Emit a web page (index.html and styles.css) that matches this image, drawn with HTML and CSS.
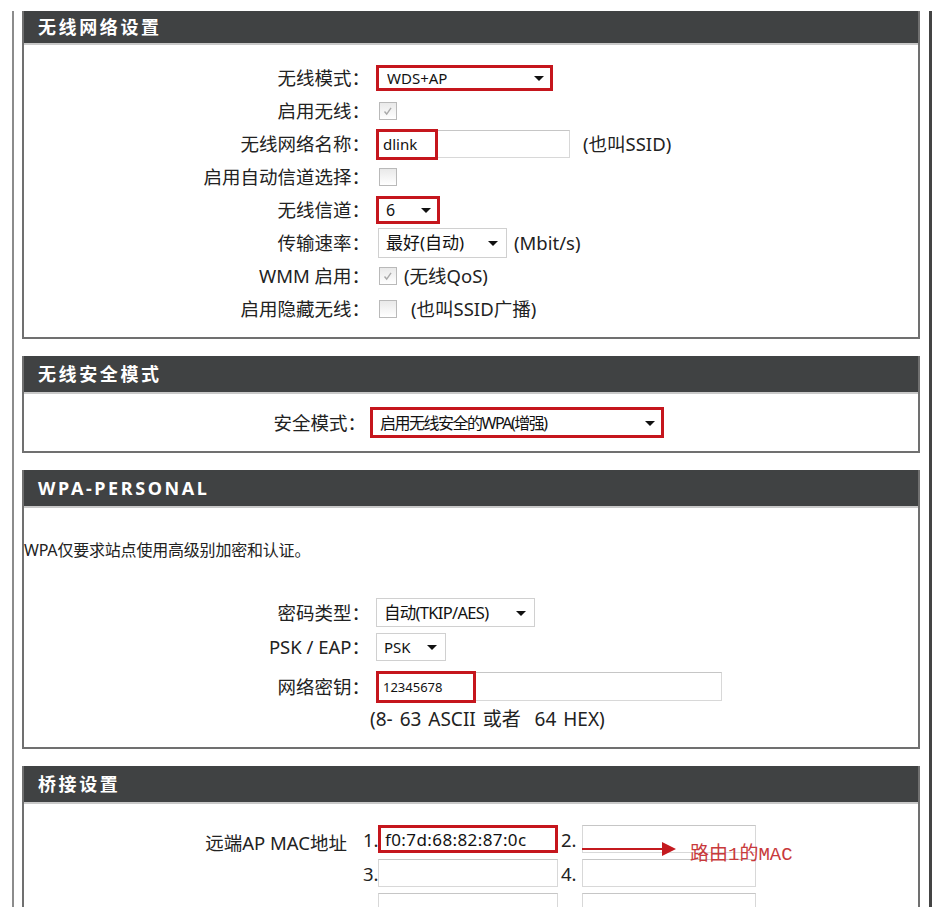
FILE: index.html
```html
<!DOCTYPE html>
<html lang="zh-CN">
<head>
    <meta charset="UTF-8">
    <meta name="viewport" content="width=device-width, initial-scale=1.0">
    <title>无线设置</title>
    <link rel="stylesheet" href="styles.css">
</head>
<body>
<div class="page">

    <!-- wireless basics -->
    <div class="box">
        <h2 class="box-title first">无线网络设置</h2>
        <div class="box-body basic">
            <div class="form-grid rows">
                <span class="label">无线模式：</span>
                <span class="field">
                    <span class="select marked sel-mode"><select><option>WDS+AP</option></select></span>
                </span>

                <span class="label">启用无线：</span>
                <span class="field">
                    <span class="check checked"><svg viewBox="0 0 16 16"><path d="M4 8.5l2.5 3 5-7"/></svg></span>
                </span>

                <span class="label">无线网络名称：</span>
                <span class="field">
                    <span class="input-wrap">
                        <input class="text ssid" type="text" value="dlink">
                        <span class="mark mark-ssid"></span>
                    </span>
                    <span class="note ssid-note">(也叫SSID)</span>
                </span>

                <span class="label">启用自动信道选择：</span>
                <span class="field">
                    <span class="check"></span>
                </span>

                <span class="label">无线信道：</span>
                <span class="field">
                    <span class="select marked sel-channel"><select><option>6</option></select></span>
                </span>

                <span class="label">传输速率：</span>
                <span class="field">
                    <span class="select sel-rate"><select><option>最好(自动)</option></select></span>
                    <span class="note">(Mbit/s)</span>
                </span>

                <span class="label">WMM 启用：</span>
                <span class="field">
                    <span class="check checked"><svg viewBox="0 0 16 16"><path d="M4 8.5l2.5 3 5-7"/></svg></span>
                    <span class="note">(无线QoS)</span>
                </span>

                <span class="label">启用隐藏无线：</span>
                <span class="field">
                    <span class="check"></span>
                    <span class="note spaced">(也叫SSID广播)</span>
                </span>
            </div>
        </div>
    </div>

    <!-- security mode -->
    <div class="box">
        <h2 class="box-title">无线安全模式</h2>
        <div class="box-body security">
            <div class="form-grid tight">
                <span class="label">安全模式：</span>
                <span class="field">
                    <span class="select marked sel-security"><select><option>启用无线安全的WPA(增强)</option></select></span>
                </span>
            </div>
        </div>
    </div>

    <!-- wpa personal -->
    <div class="box">
        <h2 class="box-title">WPA-PERSONAL</h2>
        <div class="box-body wpa">
            <p class="desc">WPA仅要求站点使用高级别加密和认证。</p>
            <div class="form-grid stack">
                <span class="label">密码类型：</span>
                <span class="field">
                    <span class="select sel-cipher"><select><option>自动(TKIP/AES)</option></select></span>
                </span>

                <span class="label">PSK / EAP：</span>
                <span class="field">
                    <span class="select sel-psk"><select><option>PSK</option></select></span>
                </span>

                <span class="label key-row">网络密钥：</span>
                <span class="field key-row">
                    <span class="input-wrap">
                        <input class="text key" type="text" value="12345678">
                        <span class="mark mark-key"></span>
                    </span>
                </span>

                <span class="field hint">(8- 63 ASCII 或者&nbsp; 64 HEX)</span>
            </div>
        </div>
    </div>

    <!-- bridge -->
    <div class="box">
        <h2 class="box-title">桥接设置</h2>
        <div class="box-body bridge">
            <div class="form-grid mac-grid">
                <span class="label mac-label">远端AP MAC地址</span>
                <div class="mac-list">
                    <span class="num">1.</span>
                    <input class="text mac marked" type="text" value="f0:7d:68:82:87:0c">
                    <span class="num">2.</span>
                    <span class="mac-cell">
                        <input class="text mac" type="text">
                        <span class="callout">
                            <svg class="arrow" viewBox="0 0 96 16"><line x1="0" y1="8" x2="82" y2="8"/><polygon points="80,1 94,8 80,15"/></svg>
                            <span class="callout-text">路由1的MAC</span>
                        </span>
                    </span>

                    <span class="num">3.</span>
                    <input class="text mac" type="text">
                    <span class="num">4.</span>
                    <input class="text mac" type="text">

                    <span class="num"></span>
                    <input class="text mac" type="text">
                    <span class="num"></span>
                    <input class="text mac" type="text">
                </div>
            </div>
        </div>
    </div>

</div>
</body>
</html>
```

FILE: styles.css
```css
body {
    margin: 0;
    background: #fff;
    font-family: "Noto Sans", "Noto Sans CJK SC", sans-serif;
    color: #222;
}

.page {
    box-sizing: border-box;
    width: 920px;
    min-height: 1000px;
    margin: 11px 0 0 12px;
    padding: 0 9px 30px 8px;
    border-left: 2px solid #8c8c8c;
    border-right: 3px solid #444;
}

.box {
    border: 2px solid #707070;
    border-top: none;
    margin-bottom: 17px;
}
.box-title {
    margin: 0;
    height: 36px;
    line-height: 36px;
    padding-left: 14px;
    background: #404243;
    border-bottom: 2px solid #c9c9c9;
    color: #fff;
    font-family: "Noto Sans", "Noto Sans CJK SC", sans-serif;
    font-size: 18px;
    font-weight: bold;
    letter-spacing: 2.6px;
}
.box-title.first {
    height: 32px;
    line-height: 32px;
}

.box-body.basic    { padding: 16px 0 12px; }
.box-body.security { padding: 13px 0 13px; }
.box-body.wpa      { padding: 31px 0 17px; }
.box-body.bridge   { padding: 21px 0 20px; }

/* label column + control column */
.form-grid {
    display: grid;
    grid-template-columns: 346px auto;
    column-gap: 6px;
    align-items: center;
    justify-content: start;
}
.form-grid.rows  { grid-auto-rows: 33px; }
.form-grid.tight { grid-template-columns: 342px auto; column-gap: 4px; }
.form-grid.stack { row-gap: 6px; }

.label {
    text-align: right;
    font-size: 18.5px;
    line-height: 24px;
    white-space: nowrap;
}
.field {
    display: flex;
    align-items: center;
    gap: 7px;
    font-size: 18.5px;
    line-height: 24px;
}
.note { white-space: nowrap; }
.note.spaced { margin-left: 7px; }
.ssid-note { margin-left: 6px; }

/* selects with a small black arrow */
.select {
    position: relative;
    display: inline-block;
}
.select select {
    -webkit-appearance: none;
    appearance: none;
    box-sizing: border-box;
    width: 100%;
    height: 100%;
    margin: 0;
    padding: 0 24px 0 7px;
    border: 1px solid #d0d0d0;
    border-radius: 0;
    background: #fff;
    font-family: "Noto Sans", "Noto Sans CJK SC", sans-serif;
    font-size: 16px;
    color: #111;
}
.select::after {
    content: "";
    position: absolute;
    right: 9px;
    top: 50%;
    margin-top: -2px;
    border-left: 5px solid transparent;
    border-right: 5px solid transparent;
    border-top: 5px solid #111;
}
.select.marked select {
    border: 3px solid #c5161d;
}

.sel-mode     { width: 177px; height: 26px; }
.sel-mode select { font-size: 15px; padding-left: 8px; }
.sel-channel  { width: 64px; height: 28px; }
.sel-rate     { width: 129px; height: 30px; margin-left: 2px; }
.sel-rate select { font-size: 17px; }
.sel-security { width: 294px; height: 31px; }
.sel-security select { font-size: 16px; letter-spacing: -1.5px; }
.sel-cipher   { width: 159px; height: 29px; }
.sel-cipher select { font-size: 16.5px; letter-spacing: -0.7px; }
.sel-psk      { width: 70px; height: 28px; }
.sel-psk select { font-size: 15px; }

/* text inputs */
.text {
    box-sizing: border-box;
    height: 28px;
    margin: 0;
    padding: 0 4px;
    border: 1px solid #d8d8d8;
    border-top-color: #c6c6c6;
    border-radius: 0;
    background: #fff;
    font-family: "Noto Sans", "Noto Sans CJK SC", sans-serif;
    font-size: 15px;
    color: #111;
}
.text.ssid { width: 192px; }
.text.key  { width: 344px; height: 29px; font-size: 13px; }

.input-wrap {
    position: relative;
    display: inline-block;
    margin-left: 2px;
    line-height: 0;
}
.mark {
    position: absolute;
    left: -2px;
    top: -1px;
    height: 25px;
    border: 3px solid #c5161d;
    pointer-events: none;
}
.mark-ssid { width: 56px; }
.mark-key  { width: 94px; height: 26px; }

/* checkboxes */
.check {
    box-sizing: border-box;
    display: inline-flex;
    align-items: center;
    justify-content: center;
    width: 18px;
    height: 18px;
    margin-left: 3px;
    border: 1px solid #b9b9b9;
    background: linear-gradient(#e9e9e9, #fff);
}
.check svg {
    width: 14px;
    height: 14px;
}
.check path {
    fill: none;
    stroke: #a9a9a9;
    stroke-width: 1.6;
}

/* wpa box */
.desc {
    margin: 0 0 37px;
    font-size: 16px;
    line-height: 22px;
    letter-spacing: -0.2px;
}
.key-row { margin-top: 5px; }
.hint {
    grid-column: 2;
    margin: 1px 0 0 -6px;
    font-size: 19px;
    line-height: 22px;
    word-spacing: 2px;
    white-space: nowrap;
}

/* bridge box */
.form-grid.mac-grid {
    grid-template-columns: 326px auto;
    column-gap: 10px;
    align-items: start;
}
.mac-label {
    padding: 6px 3px 0 0;
}
.mac-list {
    display: grid;
    grid-template-columns: 18px 180px 24px 174px;
    grid-auto-rows: 28px;
    row-gap: 6px;
    align-items: center;
}
.num {
    padding-left: 3px;
    font-size: 18.5px;
}
.text.mac {
    width: 100%;
    font-size: 17px;
    letter-spacing: 0.4px;
    padding-left: 4px;
}
.text.mac.marked {
    border: 3px solid #c5161d;
}
.mac-cell {
    position: relative;
    display: block;
    height: 28px;
}
.mac-cell .text.mac { height: 100%; }

/* red note drawn over the second address box */
.callout {
    position: absolute;
    left: 0;
    top: 7px;
    display: flex;
    align-items: center;
    gap: 12px;
    white-space: nowrap;
}
.arrow {
    width: 96px;
    height: 16px;
}
.arrow line {
    stroke: #c41a1f;
    stroke-width: 2;
}
.arrow polygon {
    fill: #c41a1f;
}
.callout-text {
    margin-top: 6px;
    font-family: "Liberation Mono", "Noto Sans CJK SC", monospace;
    font-size: 19px;
    color: #c8393b;
}
```
